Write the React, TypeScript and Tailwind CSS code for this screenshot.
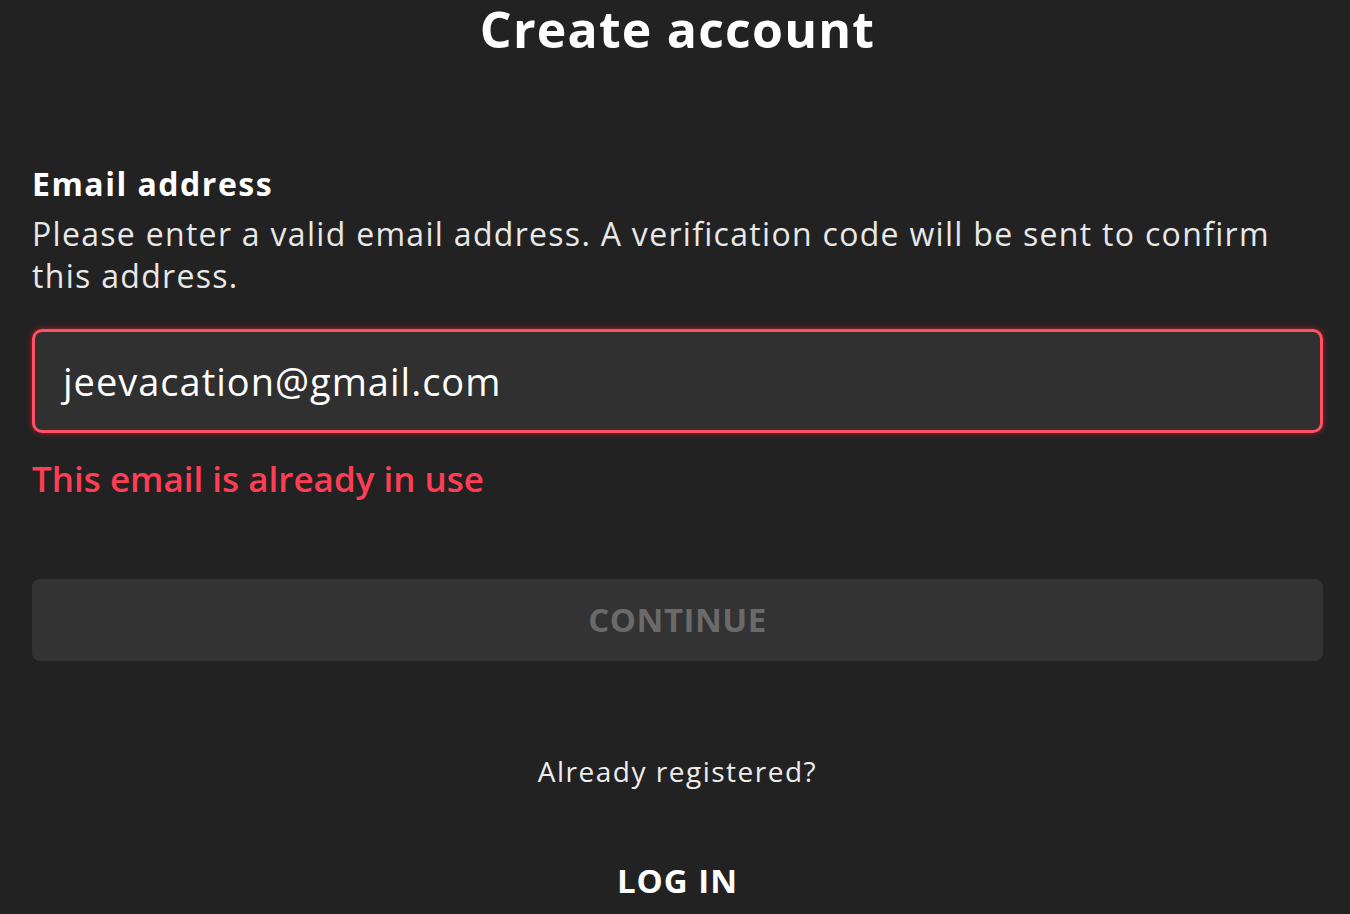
export default function App() {
  return (
    <div
      className="flex min-h-[914px] w-full flex-col bg-[#222222] pl-8 pr-[27px] text-white"
      style={{ fontFamily: '"Open Sans", "Noto Sans", sans-serif' }}
    >
      <h1 className="text-center text-[50px] font-bold leading-[58px] tracking-[1.2px]">Create account</h1>

      <div className="mt-[106px]">
        <p className="text-[32px] font-bold leading-[40px] tracking-[1.5px]">Email address</p>
        <p className="mt-[9px] text-[32px] leading-[42px] tracking-[1.3px] text-[#e8e8e8]">
          Please enter a valid email address. A verification code will be sent to confirm this address.
        </p>
      </div>

      <div className="mt-[32px] flex h-[104px] items-center rounded-[10px] border-[3px] border-[#ff5064] bg-[#303030] px-[28px] shadow-[0_0_6px_rgba(255,30,50,0.6)]">
        <span className="text-[38px] tracking-[1px] text-white">jeevacation@gmail.com</span>
      </div>

      <p className="mt-[22px] text-[35px] font-semibold leading-[48px] text-[#ff3d55]">This email is already in use</p>

      <button
        type="button"
        className="mt-[76px] flex h-[82px] w-full items-center justify-center rounded-[8px] bg-[#333333] text-[33px] font-bold tracking-[0.5px] text-[#6a6a6a]"
      >
        CONTINUE
      </button>

      <p className="mt-[90px] text-center text-[28px] leading-[40px] tracking-[1.5px] text-[#ededed]">
        Already registered?
      </p>

      <p className="mt-[70px] text-center text-[33px] font-bold leading-[40px] tracking-[1px]">LOG IN</p>
    </div>
  );
}
